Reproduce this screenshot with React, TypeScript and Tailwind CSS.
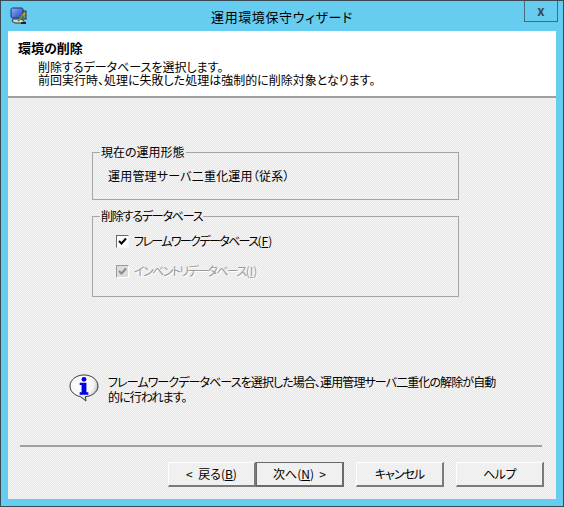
const FONT = "font-['Noto_Sans_CJK_JP',sans-serif] [font-feature-settings:'palt']";
const DITHER = "bg-[image:repeating-conic-gradient(#f3f3f3_0_25%,#e9e9e9_0_50%)] bg-[length:2px_2px]";

function AppIcon() {
  return (
    <svg width={18} height={18} viewBox="0 0 18 18" className="shrink-0">
      <defs>
        <linearGradient id="screen" x1="0" y1="0" x2="1" y2="1">
          <stop offset="0%" stopColor="#8fb4f5" />
          <stop offset="100%" stopColor="#1f3fc0" />
        </linearGradient>
      </defs>
      <rect x="11" y="4" width="5" height="8" fill="#8a8a8a" stroke="#333" />
      <rect x="1" y="1" width="12" height="10" rx="1.500" fill="url(#screen)" stroke="#1c2f80" />
      <path d="M3 12h8l3 2v2H5l-3-2z" fill="#d8d8d8" stroke="#333" />
      <path d="M8 14l6-7" stroke="#4fa03a" strokeWidth="2" />
      <path d="M13 8l2-2" stroke="#c9a020" strokeWidth="2" />
      <path d="M11 16h5" stroke="#222" strokeWidth="2" />
    </svg>
  );
}

function InfoIcon() {
  return (
    <svg width={30} height={28} viewBox="0 0 31 29" className="shrink-0">
      <defs>
        <radialGradient id="bubble" cx="40%" cy="35%" r="70%">
          <stop offset="0%" stopColor="#ffffff" />
          <stop offset="65%" stopColor="#f4f4f4" />
          <stop offset="100%" stopColor="#9c9c9c" />
        </radialGradient>
      </defs>
      <path
        d="M15.500 1C7.500 1 1 6 1 12.500c0 5.500 5 10 11 11l5.500 4.500-.5-4.500c7-.5 13-5 13-11C30 6 23.500 1 15.500 1z"
        fill="url(#bubble)"
        stroke="#333"
      />
      <circle cx="15.500" cy="5.500" r="2.500" fill="#0000e0" />
      <path d="M11 9h7v10h2v2.500h-9V19h2v-7.500h-2z" fill="#0000e0" />
    </svg>
  );
}

function Check({ disabled }: { disabled?: boolean }) {
  return (
    <span
      className={`flex h-[13px] w-[13px] shrink-0 items-center justify-center border-t border-l border-r border-b ${
        disabled
          ? "border-t-[#9a9a9a] border-l-[#9a9a9a] border-r-white border-b-white bg-[#dcdcdc]"
          : "border-t-[#6a6a6a] border-l-[#6a6a6a] border-r-[#f8f8f8] border-b-[#f8f8f8] bg-white"
      }`}
    >
      <svg width={9} height={9} viewBox="0 0 9 9">
        <path d="M1 4l2.500 2.500L8 1.500" fill="none" stroke={disabled ? "#8a8a8a" : "#000"} strokeWidth="2" />
      </svg>
    </span>
  );
}

function GroupBox({ title, className, children }: { title: string; className: string; children: React.ReactNode }) {
  return (
    <fieldset className={`w-[367px] border border-[#a5a5a5] pl-[14px] ${className}`}>
      <legend className="ml-[-7px] px-[1px] text-[12px] leading-[14px] text-black">{title}</legend>
      {children}
    </fieldset>
  );
}

function WizardButton({ children, primary }: { children: React.ReactNode; primary?: boolean }) {
  return (
    <button
      className={`h-[25px] w-[88px] border-t border-l border-r-2 border-b-2 bg-[#f0f0f0] text-[12px] leading-none text-black ${
        primary
          ? "border-[#6a6a6a] border-r-[#6a6a6a] border-b-[#6a6a6a]"
          : "border-t-white border-l-white border-r-[#7a7a7a] border-b-[#7a7a7a]"
      }`}
    >
      {children}
    </button>
  );
}

export default function App() {
  return (
    <div className={`${FONT} flex h-[507px] w-[564px] flex-col overflow-hidden border border-[#3a4a52] bg-[#67cdf0]`}>
      {/* Title bar */}
      <div className="relative flex h-[30px] shrink-0 items-center justify-center pt-[1px]">
        <span className="absolute left-[9px] top-[6px]">
          <AppIcon />
        </span>
        <span className="text-[13px] tracking-[0.6px] text-black">運用環境保守ウィザード</span>
        <span className="absolute right-[5px] top-[-1px] flex h-[22px] w-[34px] items-center justify-center border border-[#4a6a78] text-[13px] font-bold text-[#3a4a55]">
          x
        </span>
      </div>

      {/* Client area */}
      <div className={`mx-[7px] mb-[7px] flex min-h-0 flex-1 flex-col ${DITHER}`}>
        <div className="h-[67px] shrink-0 border-b-2 border-[#a0a0a0] bg-white pl-[10px] pt-[10px] text-[12px] leading-[13px] text-black">
          <div className="text-[13px] font-bold">環境の削除</div>
          <div className="mt-[6px] pl-[20px]">
            <div>削除するデータベースを選択します。</div>
            <div>前回実行時、処理に失敗した処理は強制的に削除対象となります。</div>
          </div>
        </div>

        <div className="flex flex-1 flex-col pl-[84px] pt-[47px]">
          <GroupBox title="現在の運用形態" className="h-[55px]">
            <div className="pl-[1px] pt-[10px] text-[12px] leading-[14px] tracking-[0.2px]">運用管理サーバ二重化運用（従系）</div>
          </GroupBox>
          <GroupBox title="削除するデータベース" className="mt-[9px] h-[88px] tracking-[-1.2px]">
            <label className="mt-[11px] ml-[9px] flex items-center gap-[5px] text-[12px] leading-[14px] tracking-[-1.6px]">
              <Check />
              <span>
                フレームワークデータベース
                <span className="tracking-normal">
                  (<u>F</u>)
                </span>
              </span>
            </label>
            <label className="mt-[16px] ml-[9px] flex items-center gap-[5px] text-[12px] leading-[14px] tracking-[-1.6px] text-[#9a9a9a] [text-shadow:1px_1px_0_#fff]">
              <Check disabled />
              <span>
                インベントリデータベース
                <span className="tracking-normal">
                  (<u>I</u>)
                </span>
              </span>
            </label>
          </GroupBox>
        </div>

        {/* Info note */}
        <div className="flex shrink-0 items-start gap-[9px] pl-[61px]">
          <InfoIcon />
          <p className="w-[392px] text-[12px] leading-[15px] tracking-[-0.9px] text-black">
            フレームワークデータベースを選択した場合、運用管理サーバ二重化の解除が自動的に行われます。
          </p>
        </div>

        <div className="ml-[12px] mr-[14px] mt-[41px] h-[2px] shrink-0 bg-[#a0a0a0]" />

        <div className="flex shrink-0 justify-end pb-[12px] pr-[12px] pt-[15px]">
          <WizardButton>
            &lt;&nbsp; 戻る(<u>B</u>)
          </WizardButton>
          <WizardButton primary>
            次へ(<u>N</u>) &nbsp;&gt;
          </WizardButton>
          <span className="w-[12px]" />
          <WizardButton>
            <span className="tracking-[-1px]">キャンセル</span>
          </WizardButton>
          <span className="w-[12px]" />
          <WizardButton>
            <span className="tracking-[-0.5px]">ヘルプ</span>
          </WizardButton>
        </div>
      </div>
    </div>
  );
}
